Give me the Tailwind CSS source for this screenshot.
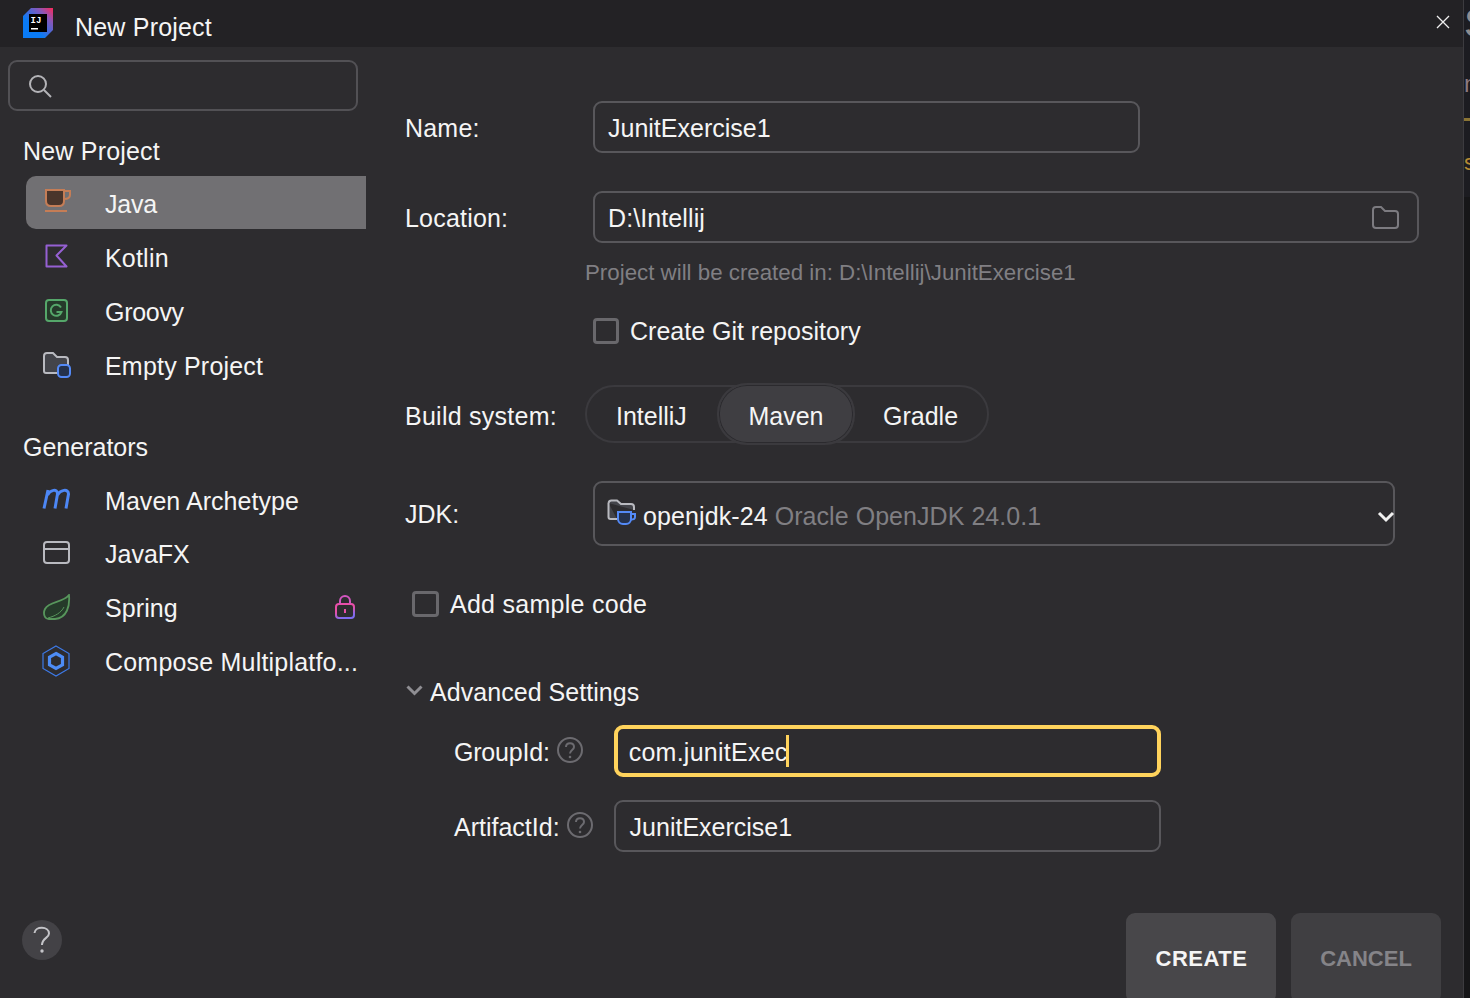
<!DOCTYPE html>
<html lang="en">
<head>
    <meta charset="UTF-8">
    <title>New Project</title>
    <script src="https://cdn.jsdelivr.net/npm/@tailwindcss/browser@4"></script>
</head>
<body class="bg-[#161618]">
    <div class="relative w-[1470px] h-[998px] overflow-hidden flex font-['Liberation_Sans',Arial,sans-serif] text-[25px] text-[#f5f5f5]">
        <!-- Dialog -->
        <div class="w-[1464px] h-full flex flex-col bg-[#2d2c2f] border-r border-[#3c3b3f]">
            <!-- Title bar -->
            <div class="h-[47px] shrink-0 bg-[#232225] flex items-center pl-[23px] pr-[13px]">
                <svg width="30" height="30" viewBox="0 0 30 30" class="mb-[1px]">
                    <defs>
                        <linearGradient id="ij" x1="0" y1="1" x2="1" y2="0">
                            <stop offset="0.35" stop-color="#0a7bf5"/>
                            <stop offset="0.75" stop-color="#8a56b8"/>
                            <stop offset="1" stop-color="#fe2857"/>
                        </linearGradient>
                    </defs>
                    <path d="M8 0H30V22L22 30H0V8Z" fill="url(#ij)"/>
                    <rect x="6" y="6" width="18" height="18" fill="#000"/>
                    <rect x="8" y="20" width="7" height="1.500" fill="#fff"/>
                    <text x="7.500" y="15" font-size="9" font-weight="700" fill="#fff" font-family="Liberation Mono, monospace">IJ</text>
                </svg>
                <span class="ml-[22px] pt-[8px] tracking-[0.2px]">New Project</span>
                <svg width="14" height="14" viewBox="0 0 14 14" class="ml-auto mb-[3px]" stroke="#f0f0f0" stroke-width="1.300" fill="none">
                    <path d="M1 1L13 13M13 1L1 13"/>
                </svg>
            </div>
            <div class="flex flex-1 min-h-0">
                <!-- Sidebar -->
                <aside class="w-[366px] shrink-0 flex flex-col relative">
                    <div class="mt-[13px] ml-[8px] w-[350px] h-[51px] border-2 border-[#525155] rounded-[9px] flex items-center pl-[18px]">
                        <svg width="24" height="24" viewBox="0 0 24 24" fill="none" stroke="#b4b4b8" stroke-width="2">
                            <circle cx="10" cy="10" r="8"/>
                            <path d="M16 16L23 23"/>
                        </svg>
                    </div>
                    <div class="mt-[26px] ml-[23px] h-[28px] leading-[28px] tracking-[0.2px]">New Project</div>
                    <div class="mt-[11px] ml-[26px] h-[53px] bg-[#717073] rounded-l-[10px] flex items-center">
                        <svg width="26" height="24" viewBox="0 0 26 24" class="ml-[19px] mb-[3px]" fill="none" stroke="#c57d56" stroke-width="2">
                            <path d="M1 1H19V12C19 15 17 17 14 17H6C3 17 1 15 1 12Z" fill="#4a352b"/>
                            <path d="M19 2H25V6C25 9 23 10 19 10"/>
                            <path d="M0 22H22"/>
                        </svg>
                        <span class="ml-[34px] pt-[4px] tracking-[-0.2px]">Java</span>
                    </div>
                    <div class="ml-[26px] mt-[2px] h-[54px] flex items-center">
                        <svg width="23" height="24" viewBox="0 0 23 24" class="ml-[19px] mb-[4px]" fill="none" stroke="#9560d3" stroke-width="2">
                            <path d="M1.500 1.500H21.500L11.500 11.500L21.500 22.500H1.500Z" stroke-linejoin="round"/>
                        </svg>
                        <span class="ml-[37px] pt-[2px] tracking-[0.2px]">Kotlin</span>
                    </div>
                    <div class="ml-[26px] h-[54px] flex items-center">
                        <svg width="23" height="23" viewBox="0 0 23 23" class="ml-[19px] mb-[4px]" fill="none">
                            <rect x="1" y="1" width="21" height="21" rx="3" fill="#253a2a" stroke="#55a76a" stroke-width="2"/>
                            <path d="M16 8.500A5.500 5.500 0 1 0 16.500 13H11.500" stroke="#55a76a" stroke-width="2"/>
                        </svg>
                        <span class="ml-[37px] pt-[2px] tracking-[-0.3px]">Groovy</span>
                    </div>
                    <div class="ml-[26px] h-[54px] flex items-center">
                        <svg width="28" height="26" viewBox="0 0 28 26" class="ml-[17px] mb-[2px]" fill="none">
                            <path d="M1 4A3 3 0 0 1 4 1H10L14 5H22A3 3 0 0 1 25 8V19A2 2 0 0 1 23 21H3A2 2 0 0 1 1 19Z" fill="#43444a" stroke="#b9bac0" stroke-width="2"/>
                            <rect x="15" y="13" width="12" height="12" rx="3.500" fill="#25324d" stroke="#548af7" stroke-width="2"/>
                        </svg>
                        <span class="ml-[34px] pt-[2px] tracking-[0.2px]">Empty Project</span>
                    </div>
                    <div class="mt-[40px] ml-[23px] h-[28px] leading-[28px]">Generators</div>
                    <div class="ml-[26px] mt-[14px] h-[54px] flex items-center">
                        <svg width="29" height="21" viewBox="0 0 29 21" class="ml-[16px] mb-[8px]" fill="none" stroke="#4d87f5" stroke-width="3">
                            <path d="M2 20.500L6 2"/>
                            <path d="M5.500 7C8 2 15.500 0 15.500 6L13 20.500"/>
                            <path d="M15.500 7C18 2 26.500 0 26.500 6L24 20.500"/>
                        </svg>
                        <span class="ml-[34px] tracking-[0.05px]">Maven Archetype</span>
                    </div>
                    <div class="ml-[26px] mt-[-1px] h-[54px] flex items-center">
                        <svg width="27" height="24" viewBox="0 0 27 24" class="ml-[17px] mb-[4px]" fill="none" stroke="#b9bac0" stroke-width="2">
                            <rect x="1" y="1" width="25" height="21" rx="3"/>
                            <path d="M1 8H26"/>
                        </svg>
                        <span class="ml-[35px]">JavaFX</span>
                    </div>
                    <div class="ml-[26px] h-[54px] flex items-center">
                        <svg width="28" height="27" viewBox="0 0 28 27" class="ml-[17px] mb-[3px]" fill="none" stroke="#57965c" stroke-width="1.800">
                            <path d="M26 1C27 12 24 24 12 25H6C1 25 0 19 2 15C6 7 20 9 26 1Z" fill="#253a2a"/>
                            <path d="M5 24C12 22 18 19 21 13" stroke-width="1"/>
                        </svg>
                        <span class="ml-[34px] tracking-[0.1px]">Spring</span>
                        <svg width="20" height="24" viewBox="0 0 20 24" class="ml-auto mr-[11px] mb-[5px]" fill="none">
                            <defs>
                                <linearGradient id="lock" x1="0" y1="0" x2="0.400" y2="1">
                                    <stop offset="0.5" stop-color="#e94fa8"/>
                                    <stop offset="1" stop-color="#7f6cf0"/>
                                </linearGradient>
                            </defs>
                            <rect x="1" y="9" width="18" height="14" rx="3" stroke="url(#lock)" stroke-width="2"/>
                            <path d="M5 9V6A5 5 0 0 1 15 6V9" stroke="#d355c0" stroke-width="2"/>
                            <path d="M10 14V18" stroke="#e94fa8" stroke-width="2"/>
                        </svg>
                    </div>
                    <div class="ml-[26px] h-[54px] flex items-center whitespace-nowrap">
                        <svg width="30" height="32" viewBox="0 0 30 32" class="ml-[15px] mb-[4px]" fill="none" stroke="#3d7ae8">
                            <path d="M15 1L28 8.500V23.500L15 31L2 23.500V8.500Z" stroke-width="1.200"/>
                            <path d="M15 8.500L21.500 12.200V19.800L15 23.500L8.500 19.800V12.200Z" stroke="#4d8cf5" stroke-width="3.200"/>
                        </svg>
                        <span class="ml-[34px] tracking-[0.2px]">Compose Multiplatfo...</span>
                    </div>
                    <div class="absolute left-[22px] top-[873px] w-[40px] h-[40px] rounded-full bg-[#434246] flex items-center justify-center">
                        <svg width="20" height="30" viewBox="0 0 20 30" fill="none" stroke="#c4c4c8" stroke-width="2">
                            <path d="M2.500 8C3 1 17 1 17 8.500C17 13 10 13 10 20"/>
                            <circle cx="10" cy="26" r="1.700" fill="#c4c4c8" stroke="none"/>
                        </svg>
                    </div>
                </aside>
                <!-- Form -->
                <main class="flex-1 min-w-0 flex flex-col pt-[54px] pl-[39px] whitespace-nowrap">
                    <div class="flex items-center h-[52px]">
                        <span class="w-[188px] pt-[4px] tracking-[0.2px]">Name:</span>
                        <div class="w-[547px] h-[52px] border-2 border-[#58575b] rounded-[9px] flex items-center pl-[13px] pt-[4px]">JunitExercise1</div>
                    </div>
                    <div class="flex items-center h-[52px] mt-[38px]">
                        <span class="w-[188px] pt-[4px] tracking-[0.2px]">Location:</span>
                        <div class="w-[826px] h-[52px] border-2 border-[#58575b] rounded-[9px] flex items-center justify-between pl-[13px] pr-[18px]">
                            <span class="pt-[4px] tracking-[0.1px]">D:\Intellij</span>
                            <svg width="27" height="23" viewBox="0 0 27 23" fill="none" stroke="#7c7b80" stroke-width="2">
                                <path d="M1 4A3 3 0 0 1 4 1H9L13 5H23A3 3 0 0 1 26 8V19A3 3 0 0 1 23 22H4A3 3 0 0 1 1 19Z"/>
                            </svg>
                        </div>
                    </div>
                    <div class="h-[30px] leading-[30px] mt-[15px] ml-[180px] text-[#807f83] text-[22.300px]">Project will be created in: D:\Intellij\JunitExercise1</div>
                    <div class="flex items-center h-[26px] mt-[30px] ml-[188px]">
                        <span class="w-[26px] h-[26px] border-[3px] border-[#69686c] rounded-[4px]"></span>
                        <span class="ml-[11px] pt-[2px]">Create Git repository</span>
                    </div>
                    <div class="flex items-center h-[58px] mt-[41px]">
                        <span class="w-[180px] pt-[6px] tracking-[0.25px]">Build system:</span>
                        <div class="relative w-[404px] h-[58px] border-2 border-[#3b3a3e] rounded-[29px] flex items-center">
                            <span class="ml-[29px] pt-[6px]">IntelliJ</span>
                            <span class="absolute left-[130px] top-[-4px] w-[138px] h-[62px] pt-[6px] bg-[#3f3e42] border-2 border-[#3b3a3e] shadow-[inset_0_0_0_1px_#2b2a2e] rounded-[30px] flex items-center justify-center">Maven</span>
                            <span class="absolute left-[296px] top-[11px]">Gradle</span>
                        </div>
                    </div>
                    <div class="flex items-center h-[65px] mt-[38px]">
                        <span class="w-[188px] mb-[3px] pt-[6px]">JDK:</span>
                        <div class="relative w-[802px] h-[65px] border-2 border-[#58575b] rounded-[9px] flex items-center pl-[12px]">
                            <svg width="30" height="28" viewBox="0 0 30 28" fill="none" class="mb-[2px]">
                                <path d="M1.500 4A3 3 0 0 1 4.500 1.500H10L14 5H24A3 3 0 0 1 27 8V11M1.500 4V18A2 2 0 0 0 3.500 20H10" fill="#43444a" stroke="#b9bac0" stroke-width="2"/>
                                <path d="M11 13H24V20A5 5 0 0 1 19 25H16A5 5 0 0 1 11 20Z" fill="#25324d" stroke="#548af7" stroke-width="2"/>
                                <path d="M24 15H28V18C28 20 26 20.500 24 20.500" stroke="#548af7" stroke-width="2"/>
                            </svg>
                            <span class="ml-[6px] pt-[6px] tracking-[0.1px]">openjdk-24</span>
                            <span class="ml-[7px] pt-[6px] text-[#807f83] tracking-[0.05px]">Oracle OpenJDK 24.0.1</span>
                            <svg width="18" height="12" viewBox="0 0 18 12" fill="none" stroke="#f0f0f0" stroke-width="3" class="absolute right-[-2px] top-[28px]">
                                <path d="M2 2L9 9L16 2"/>
                            </svg>
                        </div>
                    </div>
                    <div class="flex items-center h-[26px] mt-[45px] ml-[7px]">
                        <span class="w-[27px] h-[26px] border-[3px] border-[#69686c] rounded-[4px]"></span>
                        <span class="ml-[11px] pt-[2px] tracking-[0.27px]">Add sample code</span>
                    </div>
                    <div class="flex items-center h-[30px] mt-[61px] ml-[1px]">
                        <svg width="17" height="11" viewBox="0 0 17 11" fill="none" stroke="#8f8e93" stroke-width="3" class="mb-[5px]">
                            <path d="M1.500 1.500L8.500 8.500L15.500 1.500"/>
                        </svg>
                        <span class="ml-[7px] tracking-[0.05px]">Advanced Settings</span>
                    </div>
                    <div class="flex items-center h-[52px] mt-[17px] ml-[49px]">
                        <span class="pt-[4px] tracking-[-0.2px]">GroupId:</span>
                        <svg width="28" height="28" viewBox="0 0 28 28" class="ml-[6px] mb-[2px]" fill="none" stroke="#6c6b70" stroke-width="2">
                            <circle cx="14" cy="14" r="12"/>
                            <path d="M10 11C10 6 18 6 18 11C18 14 14 14 14 17.500"/>
                            <circle cx="14" cy="21" r="1.300" fill="#6c6b70" stroke="none"/>
                        </svg>
                        <div class="ml-[30px] w-[547px] h-[52px] border-[4px] border-[#ffd35c] rounded-[9px] flex items-center pl-[11px]">
                            <span class="pt-[4px] tracking-[0.25px]">com.junitExec</span><span class="w-[3px] h-[32px] bg-[#ffd35c] ml-[-2px]"></span>
                        </div>
                    </div>
                    <div class="flex items-center h-[52px] mt-[23px] ml-[49px]">
                        <span class="pt-[4px]">ArtifactId:</span>
                        <svg width="28" height="28" viewBox="0 0 28 28" class="ml-[6px] mb-[2px]" fill="none" stroke="#6c6b70" stroke-width="2">
                            <circle cx="14" cy="14" r="12"/>
                            <path d="M10 11C10 6 18 6 18 11C18 14 14 14 14 17.500"/>
                            <circle cx="14" cy="21" r="1.300" fill="#6c6b70" stroke="none"/>
                        </svg>
                        <div class="ml-[20px] w-[547px] h-[52px] border-2 border-[#58575b] rounded-[9px] flex items-center pl-[14px] pt-[4px]">JunitExercise1</div>
                    </div>
                    <div class="flex gap-[15px] mt-[61px] ml-[721px] text-[22px] font-bold">
                        <button class="w-[150px] h-[90px] shrink-0 bg-[#48474a] rounded-[9px] tracking-[0.5px] pt-[1px] pl-[1px]">CREATE</button>
                        <button class="w-[150px] h-[90px] shrink-0 bg-[#403f42] rounded-[9px] pt-[1px] text-[#858488]">CANCEL</button>
                    </div>
                </main>
            </div>
        </div>
        <!-- Editor behind the dialog -->
        <div class="relative flex-1 min-w-0 overflow-hidden">
            <div class="h-[197px] bg-[#1c1c21]"></div>
            <div class="absolute left-0 top-[118px] w-[6px] h-[3px] bg-[#8a7434]"></div>
            <div class="absolute left-0 top-[3px] text-[40px] leading-none text-[#8d8d90]">S</div>
            <div class="absolute left-0 top-[72px] text-[24px] leading-none text-[#8d7a80]">n</div>
            <div class="absolute left-0 top-[152px] text-[22px] leading-none text-[#b58a33]">s</div>
        </div>
    </div>
</body>
</html>
